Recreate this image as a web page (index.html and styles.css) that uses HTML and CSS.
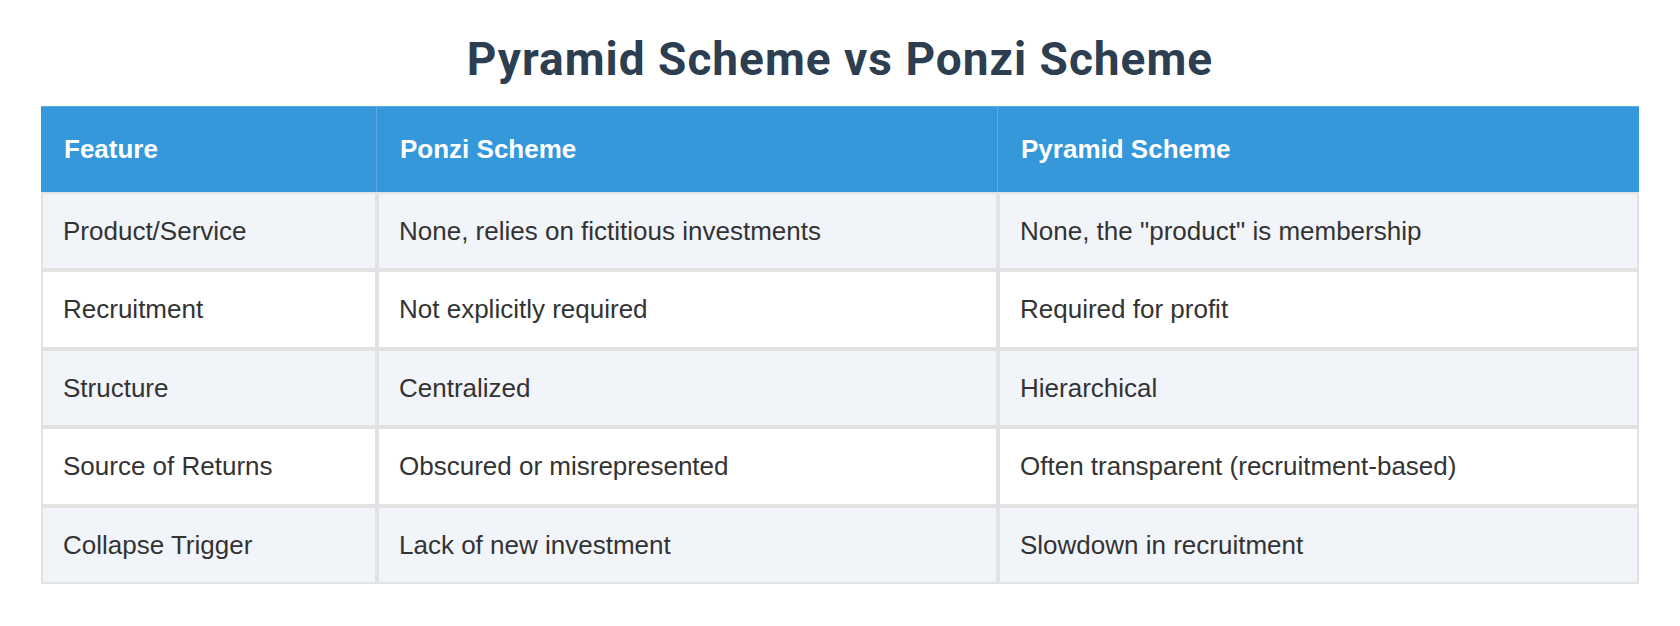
FILE: index.html
```html
<!DOCTYPE html>
<html lang="en">
<head>
<meta charset="utf-8">
<title>Pyramid Scheme vs Ponzi Scheme</title>
<link rel="stylesheet" href="styles.css">
</head>
<body>
<div class="page">
  <h1 class="title">Pyramid Scheme vs Ponzi Scheme</h1>
  <table class="compare">
    <colgroup>
      <col class="c1">
      <col class="c2">
      <col class="c3">
    </colgroup>
    <tr class="head">
      <th>Feature</th>
      <th>Ponzi Scheme</th>
      <th>Pyramid Scheme</th>
    </tr>
    <tr>
      <td>Product/Service</td>
      <td>None, relies on fictitious investments</td>
      <td>None, the "product" is membership</td>
    </tr>
    <tr>
      <td>Recruitment</td>
      <td>Not explicitly required</td>
      <td>Required for profit</td>
    </tr>
    <tr>
      <td>Structure</td>
      <td>Centralized</td>
      <td>Hierarchical</td>
    </tr>
    <tr>
      <td>Source of Returns</td>
      <td>Obscured or misrepresented</td>
      <td>Often transparent (recruitment-based)</td>
    </tr>
    <tr>
      <td>Collapse Trigger</td>
      <td>Lack of new investment</td>
      <td>Slowdown in recruitment</td>
    </tr>
  </table>
</div>
</body>
</html>
```

FILE: styles.css
```css
html, body {
  margin: 0;
  padding: 0;
  background: #ffffff;
}

.page {
  padding: 33px 41px 0;
}

.title {
  margin: 0 0 21px;
  font-family: Roboto, "Liberation Sans", sans-serif;
  font-weight: 700;
  font-size: 46px;
  letter-spacing: 1px;
  line-height: 52px;
  color: #2c3e50;
  text-align: center;
}

.compare {
  width: 100%;
  table-layout: fixed;
  border-collapse: separate;
  border-spacing: 0;
  font-family: "Liberation Sans", Arial, sans-serif;
  font-size: 26px;
  line-height: 30.4px;
  color: #333333;
}

.c1 { width: 336px; }
.c2 { width: 621px; }
.c3 { width: 641px; }

.compare th,
.compare td {
  box-sizing: border-box;
  text-align: left;
  vertical-align: middle;
}

.compare th {
  background: #3498db;
  color: #ffffff;
  font-weight: 700;
  padding: 27px 23px 27.6px;
  border-top: 1px solid #5dade2;
  border-right: 1px solid #5aa9e0;
}

.compare th:last-child {
  border-right: none;
}

.compare td {
  padding: 22px 20px;
  border: 2px solid #e2e2e2;
  background: #ffffff;
}

.compare tr:nth-child(even) td {
  background: #f1f4f9;
}
```
